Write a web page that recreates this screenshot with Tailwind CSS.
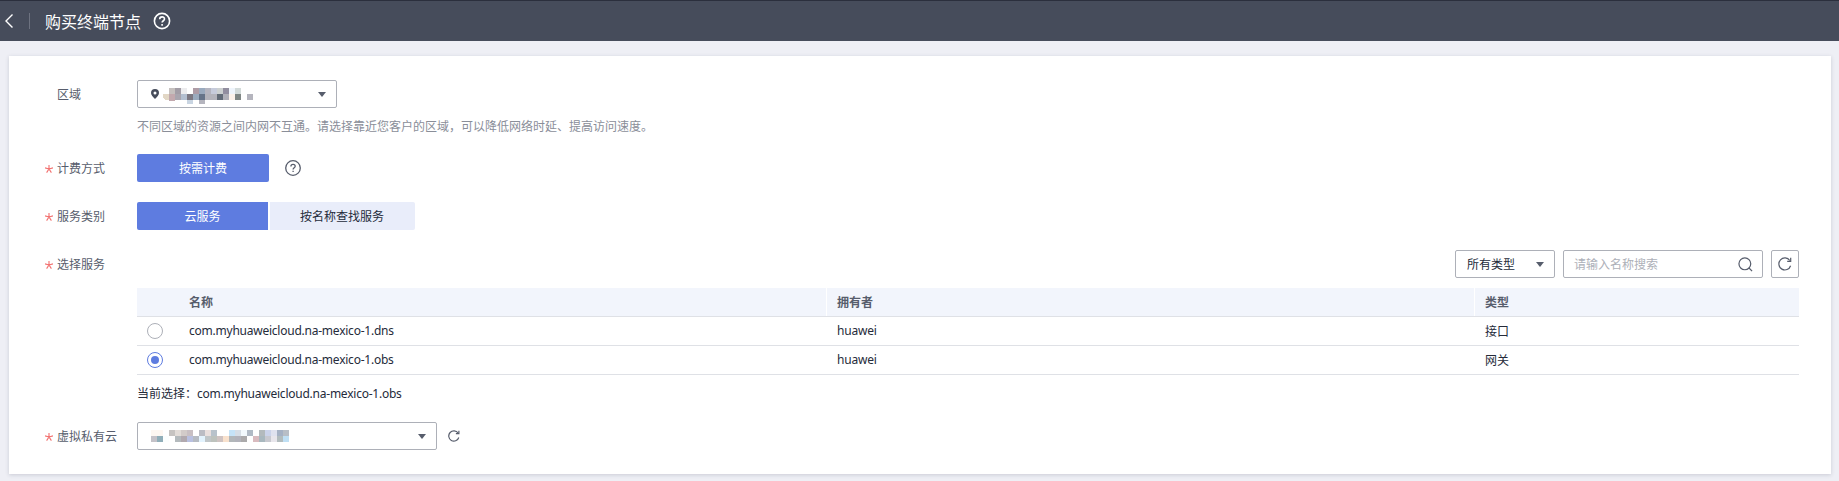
<!DOCTYPE html>
<html lang="zh-CN">
<head>
<meta charset="utf-8">
<title>购买终端节点</title>
<script src="https://cdn.jsdelivr.net/npm/@tailwindcss/browser@4"></script>
</head>
<body class="h-[481px] overflow-hidden bg-[#eeeff5] font-['Noto_Sans','Noto_Sans_CJK_SC',sans-serif] text-xs text-[#252b3a]">
<header class="flex h-[41px] items-center border-t border-[#2b2f3d] bg-[#464c5b] text-white">
  <svg class="ml-1 h-4 w-3" viewBox="0 0 12 16" fill="none" stroke="currentColor" stroke-width="1.4"><path d="M8.500 1.500 2 8l6.500 6.500"/></svg>
  <span class="ml-[13px] h-4 w-px bg-[#6d7280]"></span>
  <h1 class="ml-[15px] pt-px text-base leading-5 font-normal">购买终端节点</h1>
  <svg class="ml-3 h-[18px] w-[18px]" viewBox="0 0 18 18" fill="none" stroke="currentColor" stroke-width="1.6"><circle cx="9" cy="9" r="7.600"/><path d="M6.700 7.200c0-3.100 4.800-3 4.800-.2 0 1.800-2.400 1.700-2.400 3.600M9.100 12v1.700"/></svg>
</header>
<main class="mt-[15px] mr-2 ml-[9px] h-[418px] bg-white pt-6 pr-8 shadow-[0_1px_4px_rgba(60,65,90,0.2)]">
  <section class="flex h-[74px]">
    <div class="h-7 w-32 shrink-0 pt-px pl-12 leading-7 text-[#575d6c]">区域</div>
    <div>
      <div class="flex h-7 w-[200px] items-center rounded-xs border border-[#adb0b8] pr-[10px] pl-[13px]">
        <svg class="h-[10px] w-2" viewBox="0 0 8 10"><path fill="#464c5b" fill-rule="evenodd" d="M4 0a4 4 0 0 0-4 4c0 2 2 4 4 6 2-2 4-4 4-6a4 4 0 0 0-4-4Zm0 2.500a1.500 1.500 0 1 1 0 3 1.500 1.500 0 0 1 0-3Z"/></svg>
        <svg class="mt-1 ml-1 h-4 w-[92px]" viewBox="0 0 92 16" shape-rendering="crispEdges">
          <path fill="#c5c0be" d="M6 0h6v6H6z"/><path fill="#a29da6" d="M12 0h6v6h-6z"/><path fill="#ececee" d="M18 0h6v6h-6z"/><path fill="#ae9ca6" d="M30 0h6v6h-6z"/><path fill="#9aaabe" d="M36 0h6v6h-6z"/><path fill="#b5b5c0" d="M42 0h6v6h-6z"/><path fill="#c6cbdb" d="M48 0h6v6h-6z"/><path fill="#ccd0d0" d="M54 0h6v6h-6z"/><path fill="#928e9f" d="M60 0h6v6h-6z"/><path fill="#eff5fc" d="M66 0h6v6h-6z"/><path fill="#d3dbda" d="M72 0h6v6h-6z"/>
          <path fill="#e2d7c5" d="M0 6h6v6H2L0 10z"/><path fill="#c2a9ae" d="M6 6h6v7H6z"/><path fill="#a8a5ae" d="M12 6h6v6h-6z"/><path fill="#b3bfd0" d="M18 6h6v6h-6z"/><path fill="#7c7882" d="M24 6h6v6h-6z"/><path fill="#9aaabd" d="M30 6h6v6h-6z"/><path fill="#667489" d="M36 6h6v6h-6z"/><path fill="#b3b3bb" d="M42 6h12v6H42z"/><path fill="#626b77" d="M54 6h6v6h-6z"/><path fill="#b0b0b8" d="M60 6h6v6h-6z"/><path fill="#fcf2ea" d="M66 6h6v6h-6z"/><path fill="#808785" d="M72 6h6v6h-6z"/><path fill="#b5b5be" d="M84 6h6v6h-6z"/>
          <path fill="#c9d5e2" d="M24 12h6v4h-6z"/><path fill="#b5b5be" d="M36 12h6v4h-6z"/>
        </svg>
        <svg class="ml-auto h-[5px] w-2" viewBox="0 0 8 5"><path fill="#575d6c" d="M0 0h8L4 5Z"/></svg>
      </div>
      <p class="mt-[9px] leading-5 text-[#8a8e99]">不同区域的资源之间内网不互通。请选择靠近您客户的区域，可以降低网络时延、提高访问速度。</p>
    </div>
  </section>

  <section class="flex h-12">
    <div class="flex h-7 w-32 shrink-0 items-center gap-1 pt-px pl-9 text-[#575d6c]"><svg class="h-2 w-2" viewBox="0 0 8 8" fill="none" stroke="#f2706f" stroke-width="1.100"><path d="M4 0v4M0 2.900 4 4l4-1.100M1.600 7.600 4 4l2.400 3.600"/></svg>计费方式</div>
    <div class="h-7 w-[132px] rounded-xs bg-[#5e7ce0] pt-px text-center leading-7 text-white">按需计费</div>
    <svg class="mt-[6px] ml-4 h-4 w-4" viewBox="0 0 16 16" fill="none" stroke="#575d6c" stroke-width="1.300"><circle cx="8" cy="8" r="7.300"/><path d="M5.900 6.500c0-2.900 4.300-2.700 4.300-.2 0 1.600-2.100 1.500-2.100 3.300M8.100 10.800v1.300"/></svg>
  </section>

  <section class="flex h-12">
    <div class="flex h-7 w-32 shrink-0 items-center gap-1 pt-px pl-9 text-[#575d6c]"><svg class="h-2 w-2" viewBox="0 0 8 8" fill="none" stroke="#f2706f" stroke-width="1.100"><path d="M4 0v4M0 2.900 4 4l4-1.100M1.600 7.600 4 4l2.400 3.600"/></svg>服务类别</div>
    <div class="h-7 w-[131px] rounded-l-xs bg-[#5e7ce0] pt-px text-center leading-7 text-white">云服务</div>
    <div class="ml-[2px] h-7 w-[145px] rounded-r-xs bg-[#e9edfa] pt-px pr-px text-center leading-7">按名称查找服务</div>
  </section>

  <section class="flex h-[172px]">
    <div class="flex h-7 w-32 shrink-0 items-center gap-1 pt-px pl-9 text-[#575d6c]"><svg class="h-2 w-2" viewBox="0 0 8 8" fill="none" stroke="#f2706f" stroke-width="1.100"><path d="M4 0v4M0 2.900 4 4l4-1.100M1.600 7.600 4 4l2.400 3.600"/></svg>选择服务</div>
    <div class="flex-1">
      <div class="flex h-7 justify-end gap-2">
        <div class="flex w-[100px] items-center justify-between rounded-xs border border-[#adb0b8] pr-[10px] pl-[11px]"><span class="pt-px">所有类型</span><svg class="h-[5px] w-2" viewBox="0 0 8 5"><path fill="#575d6c" d="M0 0h8L4 5Z"/></svg></div>
        <div class="flex w-[200px] items-center justify-between rounded-xs border border-[#adb0b8] pr-[9px] pl-[10px] text-[#adb0b8]"><span class="pt-px">请输入名称搜索</span><svg class="h-[15px] w-[15px]" viewBox="0 0 16 16" fill="none" stroke="#575d6c" stroke-width="1.300"><circle cx="7.300" cy="7.300" r="6.300"/><path d="m11.500 11.500 3.500 3.500"/></svg></div>
        <div class="flex w-7 items-center justify-center rounded-xs border border-[#adb0b8]"><svg class="h-[14px] w-[14px]" viewBox="0 0 14 14" fill="none" stroke="#575d6c" stroke-width="1.200"><path d="M12.600 8.800A6 6 0 1 1 11.800 3.500"/><path d="M12.700.8v3.500H9.200"/></svg></div>
      </div>
      <div class="mt-[10px] leading-5">
        <div class="grid h-[29px] grid-cols-[42px_647px_648px_1fr] border-b border-[#dfe1e6] bg-[#f2f5fc] font-bold text-[#575d6c]"><span></span><span class="pt-[5px] pl-[10px]">名称</span><span class="border-l border-white pt-[5px] pl-[10px]">拥有者</span><span class="border-l border-white pt-[5px] pl-[10px]">类型</span></div>
        <div class="grid h-[29px] grid-cols-[42px_647px_648px_1fr] items-center border-b border-[#dfe1e6]"><span class="ml-[10px] h-4 w-4 rounded-full border border-[#adb0b8]"></span><span class="pl-[10px] tracking-[-0.235px]">com.myhuaweicloud.na-mexico-1.dns</span><span class="pl-[11px] tracking-[-0.2px]">huawei</span><span class="pt-px pl-[11px]">接口</span></div>
        <div class="grid h-[29px] grid-cols-[42px_647px_648px_1fr] items-center border-b border-[#dfe1e6]"><span class="ml-[10px] flex h-4 w-4 items-center justify-center rounded-full border border-[#5e7ce0]"><span class="h-2 w-2 rounded-full bg-[#5e7ce0]"></span></span><span class="pl-[10px] tracking-[-0.235px]">com.myhuaweicloud.na-mexico-1.obs</span><span class="pl-[11px] tracking-[-0.2px]">huawei</span><span class="pt-px pl-[11px]">网关</span></div>
      </div>
      <p class="mt-[9px] leading-5">当前选择：<span class="tracking-[-0.235px]">com.myhuaweicloud.na-mexico-1.obs</span></p>
    </div>
  </section>

  <section class="flex h-7">
    <div class="flex h-7 w-32 shrink-0 items-center gap-1 pt-px pl-9 text-[#575d6c]"><svg class="h-2 w-2" viewBox="0 0 8 8" fill="none" stroke="#f2706f" stroke-width="1.100"><path d="M4 0v4M0 2.900 4 4l4-1.100M1.600 7.600 4 4l2.400 3.600"/></svg>虚拟私有云</div>
    <div class="flex w-[300px] items-center justify-between rounded-xs border border-[#adb0b8] pr-[10px] pl-[13px]">
      <svg class="h-3 w-[138px]" viewBox="0 0 138 12" shape-rendering="crispEdges">
        <path fill="#fdf7f2" d="M0 0h12v6H0z"/><path fill="#c6c3c1" d="M18 0h6v6h-6z"/><path fill="#e2dcd8" d="M24 0h6v6h-6z"/><path fill="#d2cbc9" d="M30 0h6v6h-6z"/><path fill="#c8bfc3" d="M36 0h6v6h-6z"/><path fill="#bbbcc4" d="M48 0h6v6h-6z"/><path fill="#e9dfde" d="M54 0h6v6h-6z"/><path fill="#b8c2cb" d="M60 0h6v6h-6z"/><path fill="#c5e3f7" d="M78 0h6v6h-6z"/><path fill="#d6dee6" d="M84 0h6v6h-6z"/><path fill="#f2f9fd" d="M90 0h6v6h-6z"/><path fill="#b0bac5" d="M96 0h6v6h-6z"/><path fill="#b3babd" d="M108 0h6v6h-6z"/><path fill="#cbd3ea" d="M114 0h6v6h-6z"/><path fill="#dfe2ef" d="M120 0h6v6h-6z"/><path fill="#a5b1c4" d="M126 0h6v6h-6z"/><path fill="#b8bec6" d="M132 0h6v6h-6z"/>
        <path fill="#c4c2c8" d="M0 6h6v6H0z"/><path fill="#90aeb9" d="M6 6h6v6H6z"/><path fill="#fbfefe" d="M12 6h6v6h-6z"/><path fill="#b4babd" d="M24 6h6v6h-6z"/><path fill="#b1a9af" d="M30 6h6v6h-6z"/><path fill="#b9c0e0" d="M36 6h6v6h-6z"/><path fill="#b6bbc3" d="M42 6h6v6h-6z"/><path fill="#e3f3fe" d="M48 6h6v6h-6z"/><path fill="#c0c6c9" d="M54 6h6v6h-6z"/><path fill="#bdc2bd" d="M60 6h6v6h-6z"/><path fill="#cfc3c2" d="M66 6h6v6h-6z"/><path fill="#f8e1cd" d="M72 6h6v6h-6z"/><path fill="#b2b7ba" d="M78 6h6v6h-6z"/><path fill="#b2b3bb" d="M84 6h6v6h-6z"/><path fill="#abaaab" d="M90 6h6v6h-6z"/><path fill="#d9bbbf" d="M102 6h6v6h-6z"/><path fill="#a9b8bf" d="M108 6h6v6h-6z"/><path fill="#c8c9d0" d="M114 6h6v6h-6z"/><path fill="#e8e6ec" d="M120 6h6v6h-6z"/><path fill="#b2bcbe" d="M126 6h6v6h-6z"/><path fill="#bfdff4" d="M132 6h6v6h-6z"/>
      </svg>
      <svg class="h-[5px] w-2" viewBox="0 0 8 5"><path fill="#575d6c" d="M0 0h8L4 5Z"/></svg>
    </div>
    <svg class="mt-2 ml-[11px] h-3 w-3" viewBox="0 0 14 14" fill="none" stroke="#575d6c" stroke-width="1.400"><path d="M12.600 8.800A6 6 0 1 1 11.800 3.500"/><path d="M12.700.8v3.500H9.200"/></svg>
  </section>
</main>
</body>
</html>
